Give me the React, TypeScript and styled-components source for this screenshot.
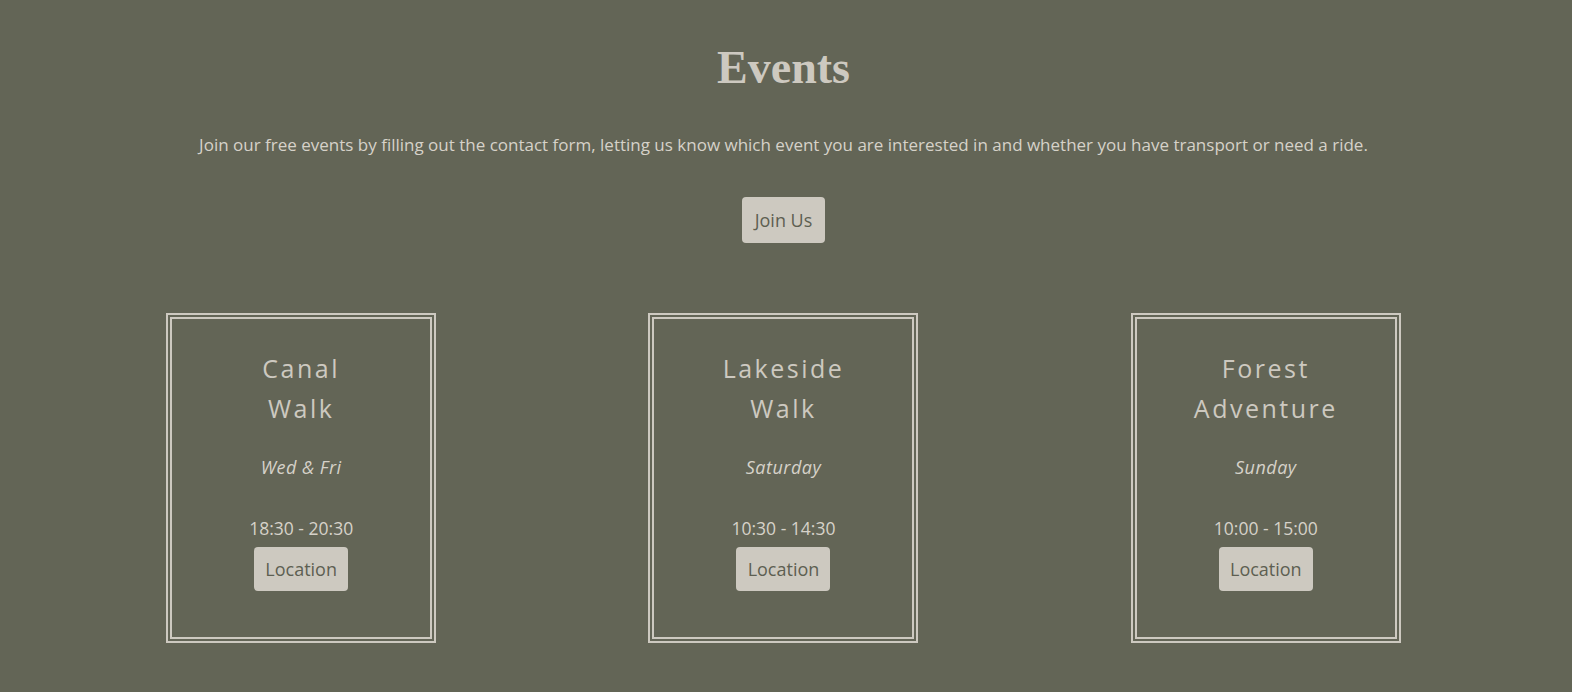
import React from "react";
import styled, { createGlobalStyle } from "styled-components";

const GlobalStyle = createGlobalStyle`
  html, body {
    margin: 0;
    padding: 0;
    background: #636556;
  }
  body {
    font-family: "Open Sans", "Noto Sans", sans-serif;
    color: #cdc9c0;
  }
`;

const Section = styled.section`
  display: flex;
  flex-direction: column;
  align-items: center;
  padding: 42px 65px 40px 60px;
  text-align: center;
`;

const Title = styled.h1`
  margin: 0;
  font-family: "Liberation Serif", "Times New Roman", serif;
  font-weight: 700;
  font-size: 46px;
  line-height: 51px;
  color: #cdc9c0;
`;

const Intro = styled.p`
  margin: 40px 0 0;
  font-size: 17px;
  line-height: 24px;
  color: #d6d2c9;
`;

const Button = styled.button<{ $w: number; $h: number }>`
  width: ${(p) => p.$w}px;
  height: ${(p) => p.$h}px;
  padding: 0;
  border: none;
  border-radius: 4px;
  background: #cdc9c0;
  color: #5d5f52;
  font-family: "Open Sans", "Noto Sans", sans-serif;
  font-size: 18px;
  cursor: pointer;
`;

const JoinWrap = styled.div`
  margin-top: 40px;
`;

const Grid = styled.div`
  margin-top: 70px;
  width: 100%;
  display: grid;
  grid-template-columns: repeat(3, 1fr);
  justify-items: center;
`;

const Card = styled.article`
  box-sizing: border-box;
  width: 270px;
  height: 330px;
  border: 6px double #cdc9c0;
  padding: 29px 58px 0;
  display: flex;
  flex-direction: column;
  align-items: center;
`;

const CardTitle = styled.h2`
  margin: 0;
  font-weight: 400;
  font-size: 25px;
  line-height: 40px;
  letter-spacing: 2.5px;
  color: #cdc9c0;
`;

const Day = styled.p`
  margin: 26px 0 0;
  font-style: italic;
  font-size: 18px;
  line-height: 27px;
  letter-spacing: 0.5px;
  color: #d6d2c9;
`;

const Time = styled.p`
  margin: 34px 0 5px;
  font-size: 17.5px;
  line-height: 27px;
  color: #d6d2c9;
`;

const events = [
  { title: "Canal Walk", day: "Wed & Fri", time: "18:30 - 20:30" },
  { title: "Lakeside Walk", day: "Saturday", time: "10:30 - 14:30" },
  { title: "Forest Adventure", day: "Sunday", time: "10:00 - 15:00" },
];

export default function App() {
  return (
    <>
      <GlobalStyle />
      <Section>
        <Title>Events</Title>
        <Intro>
          Join our free events by filling out the contact form, letting us know which event you are
          interested in and whether you have transport or need a ride.
        </Intro>
        <JoinWrap>
          <Button $w={83} $h={46}>Join Us</Button>
        </JoinWrap>
        <Grid>
          {events.map((e) => (
            <Card key={e.title}>
              <CardTitle>{e.title}</CardTitle>
              <Day>{e.day}</Day>
              <Time>{e.time}</Time>
              <Button $w={94} $h={44}>Location</Button>
            </Card>
          ))}
        </Grid>
      </Section>
    </>
  );
}
